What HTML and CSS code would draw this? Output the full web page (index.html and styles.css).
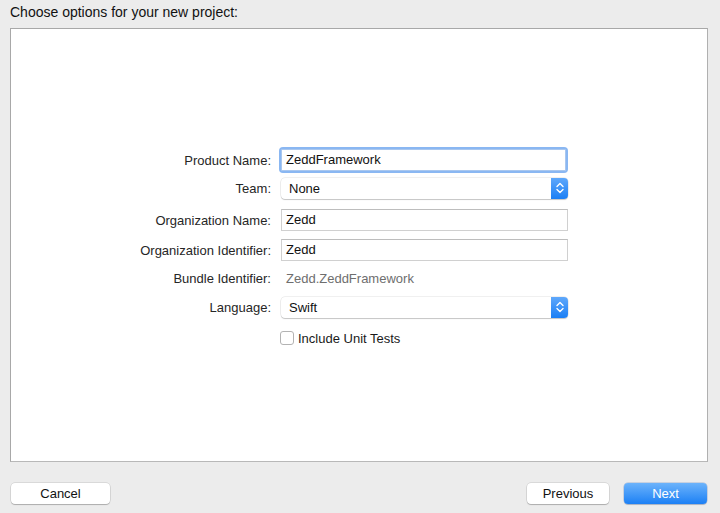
FILE: index.html
```html
<!DOCTYPE html>
<html>
<head>
<meta charset="utf-8">
<link rel="stylesheet" href="styles.css">
</head>
<body>
<div class="window">
  <div class="title">Choose options for your new project:</div>
  <div class="panel">
    <div class="form">
      <div class="label">Product Name:</div>
      <div class="cell"><div class="focus"><div class="field">ZeddFramework</div></div></div>

      <div class="label">Team:</div>
      <div class="cell"><div class="popup"><span class="ptext">None</span><span class="stepper"><svg width="10" height="14" viewBox="0 0 10 14"><path d="M2 5.5 L5 2.5 L8 5.5 M2 8.5 L5 11.5 L8 8.5" fill="none" stroke="#fff" stroke-width="1.4" stroke-linecap="round" stroke-linejoin="round"/></svg></span></div></div>

      <div class="label">Organization Name:</div>
      <div class="cell"><div class="field plain">Zedd</div></div>

      <div class="label">Organization Identifier:</div>
      <div class="cell"><div class="field plain">Zedd</div></div>

      <div class="label">Bundle Identifier:</div>
      <div class="cell"><div class="static">Zedd.ZeddFramework</div></div>

      <div class="label">Language:</div>
      <div class="cell"><div class="popup"><span class="ptext">Swift</span><span class="stepper"><svg width="10" height="14" viewBox="0 0 10 14"><path d="M2 5.5 L5 2.5 L8 5.5 M2 8.5 L5 11.5 L8 8.5" fill="none" stroke="#fff" stroke-width="1.4" stroke-linecap="round" stroke-linejoin="round"/></svg></span></div></div>

      <div class="label"></div>
      <div class="cell"><label class="check"><span class="box"></span><span>Include Unit Tests</span></label></div>
    </div>
  </div>
  <div class="footer">
    <button class="btn cancel">Cancel</button>
    <div class="right">
      <button class="btn prev">Previous</button>
      <button class="btn primary next">Next</button>
    </div>
  </div>
</div>
</body>
</html>
```

FILE: styles.css
```css
html, body {
  margin: 0;
  padding: 0;
  background: #ececec;
}
body {
  font-family: "Liberation Sans", Arial, sans-serif;
  font-size: 13px;
  color: #1a1a1a;
  width: 720px;
  height: 513px;
  overflow: hidden;
}
.window {
  display: flex;
  flex-direction: column;
}
.title {
  height: 16px;
  line-height: 16px;
  font-size: 14px;
  padding: 4px 10px 0 10px;
  margin-bottom: 8px;
  color: #111;
}
.panel {
  margin-left: 10px;
  width: 698px;
  height: 434px;
  box-sizing: border-box;
  background: #ffffff;
  border: 1px solid #a8a8a8;
  border-bottom-color: #b8b8b8;
  border-right-color: #b0b0b0;
  padding-top: 117px;
}
.form {
  display: grid;
  grid-template-columns: 260px 287px;
  column-gap: 10px;
  grid-template-rows: 28px 28px 36px 24px 32px 26px 36px;
  align-items: center;
}
.label {
  text-align: right;
  color: #262626;
  line-height: 15px;
}
.cell {
  display: flex;
  align-items: center;
}
.focus {
  margin-left: -2px;
  padding: 2px;
  border-radius: 4px;
  background: #8ab7f2;
  width: 287px;
}
.field {
  box-sizing: border-box;
  height: 22px;
  line-height: 20px;
  background: #fff;
  border: 1px solid #c6c6c6;
  border-top-color: #b4b4b4;
  padding-left: 4px;
  color: #111;
  width: 100%;
}
.focus .field {
  border-color: #a9c7ef;
  height: 22px;
  border-radius: 1px;
}
.field.plain {
  width: 287px;
  border-color: #d0d0d0;
  border-top-color: #bdbdbd;
}
.static {
  padding-left: 5px;
  color: #6e6e6e;
}
.popup {
  box-sizing: border-box;
  width: 287px;
  height: 21px;
  background: #fff;
  border-radius: 4px;
  box-shadow: 0 0 0 0.5px rgba(0,0,0,0.12), 0 1px 1px rgba(0,0,0,0.18);
  display: flex;
  align-items: center;
  justify-content: space-between;
}
.ptext {
  padding-left: 8px;
  line-height: 15px;
  color: #111;
}
.stepper {
  width: 17px;
  height: 21px;
  border-radius: 0 4px 4px 0;
  background: linear-gradient(#5fa8fb, #1b7ff5);
  display: flex;
  align-items: center;
  justify-content: center;
}
.stepper svg {
  display: block;
}
.check {
  display: flex;
  align-items: center;
  gap: 4px;
  color: #1a1a1a;
}
.box {
  margin-left: -1px;
  box-sizing: border-box;
  width: 14px;
  height: 14px;
  border: 1px solid #b3b3b3;
  border-radius: 3px;
  background: #fff;
}
.footer {
  display: flex;
  justify-content: space-between;
  margin-top: 21px;
  padding: 0 13px 0 11px;
}
.right {
  display: flex;
  gap: 15px;
}
.btn {
  font-family: "Liberation Sans", Arial, sans-serif;
  font-size: 13px;
  height: 21px;
  line-height: 19px;
  padding: 0;
  background: #fff;
  color: #111;
  border: none;
  border-radius: 4px;
  box-shadow: 0 0 0 0.5px rgba(0,0,0,0.16), 0 1px 1px rgba(0,0,0,0.2);
  text-align: center;
}
.cancel { width: 99px; }
.prev { width: 82px; }
.next { width: 83px; }
.primary {
  background: linear-gradient(#6cb3fb, #1c80f5);
  color: #fff;
  box-shadow: 0 0 0 0.5px rgba(0,60,160,0.3), 0 1px 1px rgba(0,0,0,0.15);
}
```
